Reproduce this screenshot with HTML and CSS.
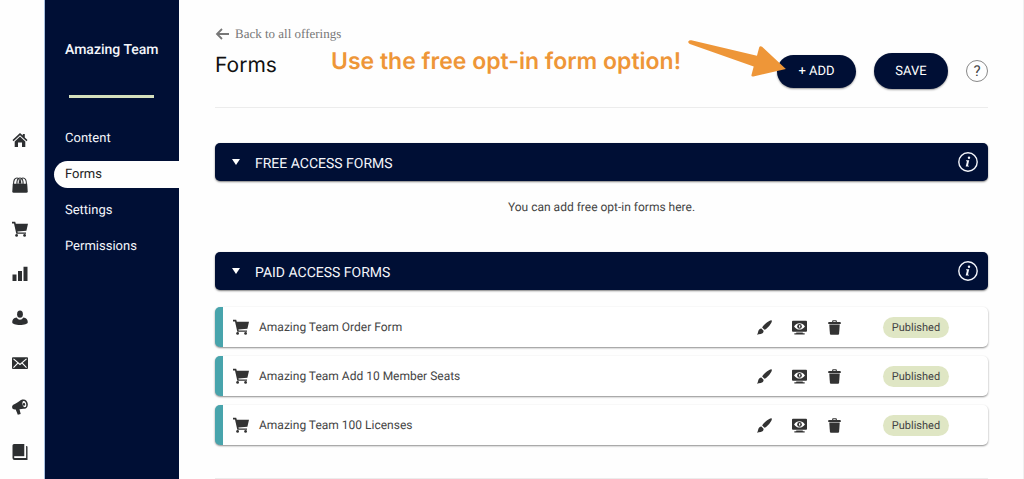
FILE: index.html
```html
<!DOCTYPE html>
<html lang="en">
<head>
  <meta charset="UTF-8">
  <meta name="viewport" content="width=device-width, initial-scale=1.0">
  <title>Forms - Amazing Team</title>
  <link rel="stylesheet" href="styles.css">
</head>
<body>

<!-- shared icons -->
<svg class="icon-defs" aria-hidden="true">
  <symbol id="icon-cart" viewBox="0 0 16 16">
    <path d="M0 .8h3.200l.6 2H16l-1.600 7-9 .6.3 1H14v1.400H4.300L2 2.400H0z"/>
    <circle cx="4.600" cy="14.400" r="1.400"/>
    <circle cx="12.600" cy="14.400" r="1.400"/>
  </symbol>
  <symbol id="icon-brush" viewBox="0 0 16 16">
    <path d="M15.600.4c.8 1-.5 3.200-2 5.100-1.800 2.300-3.800 4.100-5.600 5L5.500 8.100c.9-1.800 2.800-3.800 5-5.400C12.500 1.200 14.900-.3 15.600.4z"/>
    <path d="M4.700 9.100l2.300 2.300c.2 2-1 3.200-3 3.400-1.400.2-2.900.5-4 .9.600-.8.9-1.800 1.200-3.200.4-2 1.600-3.400 3.500-3.400z"/>
  </symbol>
  <symbol id="icon-preview" viewBox="0 0 16 16">
    <path fill-rule="evenodd" d="M1 .8h14a1 1 0 0 1 1 1v9.700a1 1 0 0 1-1 1H1a1 1 0 0 1-1-1V1.800a1 1 0 0 1 1-1zM2.200 6.800C3.700 4.600 5.700 3.400 8 3.400s4.300 1.200 5.800 3.400C12.300 9 10.300 10.200 8 10.200S3.700 9 2.200 6.800z"/>
    <circle cx="8" cy="6.800" r="2.500"/>
    <path class="icon-hole" d="M7.500 5.600h1.300v2.400H7.500z"/>
    <path d="M4.500 13.400h7v.8h2V15.500H2.500v-1.300h2z"/>
  </symbol>
  <symbol id="icon-trash" viewBox="0 0 16 16">
    <path fill-rule="evenodd" d="M5.500 2V1.200Q5.500.3 6.400.3h3.200q.9 0 .9.900V2H14q.7 0 .7.7v1.600H1.300V2.700Q1.300 2 2 2zM6.700 1.400V2h2.600v-.6z"/>
    <path d="M2.400 4.900h11.200l-.7 9.700q-.1 1.100-1.100 1.100H4.200q-1 0-1.100-1.100z"/>
  </symbol>
  <symbol id="icon-info" viewBox="0 0 20 20">
    <circle cx="10" cy="10" r="9.200" fill="none" stroke="currentColor" stroke-width="1.400"/>
    <circle cx="11" cy="5.700" r="1.200"/>
    <path d="M8.200 8.300h3l-1.300 5.400h1.300l-.3.900H7.700l1.300-5.400H8z"/>
  </symbol>
</svg>

<div class="app">
  <nav class="rail" aria-label="Main">
    <a href="#" aria-label="Home">
      <svg class="icon" viewBox="0 0 16 16">
        <path d="M8 1l2.800 2.500V2h2v3.400L15.500 8l-1 1.200L8 3.200 1.500 9.200.5 8z"/>
        <path d="M8 4.500l5.300 5V15H10v-4.500H6V15H2.700V9.500z"/>
      </svg>
    </a>
    <a href="#" aria-label="Products">
      <svg class="icon" viewBox="0 0 16 16">
        <path d="M.8 6.800h14.400l.5 7.700q0 1.300-1.300 1.300H1.600Q.3 15.800.3 14.500z"/>
        <path d="M1.500 7.500Q1.500 1 5 1T7 7.500M9 7.500Q7.500 1 11 1t3.500 6.500M5 7.500Q4.500 1 8 1t3 6.500" fill="none" stroke="currentColor" stroke-width="1.100"/>
      </svg>
    </a>
    <a href="#" aria-label="Orders"><svg class="icon"><use href="#icon-cart"/></svg></a>
    <a href="#" aria-label="Reports">
      <svg class="icon" viewBox="0 0 16 16">
        <path d="M.5 8.500h4v6.500h-4zM6 5h4v10H6zM11.500.8h4V15h-4z"/>
      </svg>
    </a>
    <a href="#" aria-label="Contacts">
      <svg class="icon" viewBox="0 0 16 16">
        <ellipse cx="8" cy="4.200" rx="2.900" ry="3.600"/>
        <path d="M4.600 7.600Q6 9.800 8 9.800t3.400-2.200c3 .6 4.400 2 4.400 4.700 0 1.700-3.500 2.700-7.800 2.700S.2 14 .2 12.300c0-2.700 1.400-4.100 4.400-4.700z"/>
      </svg>
    </a>
    <a href="#" aria-label="Email">
      <svg class="icon" viewBox="0 0 16 16">
        <rect x="0" y="2.300" width="16" height="11.800" rx="1"/>
        <path d="M1.500 3.800L8 9.500l6.500-5.700M1.500 12.700l4.300-4.500M14.500 12.700l-4.300-4.500" fill="none" stroke="#fff" stroke-width="1.100"/>
      </svg>
    </a>
    <a href="#" aria-label="Marketing">
      <svg class="icon" viewBox="0 0 16 16">
        <path fill-rule="evenodd" d="M10.200.6c3-.8 5.300 1.200 5.600 4.300.2 2.900-1.300 4.900-3.600 4.800-1.500-.1-3 .1-4.700.6l1.200 4.700-2.900.8-2.100-5.300C1.700 10.800.2 10 .1 8.300 0 6.500 1 5.500 2.800 4.900 6 3.800 8 1.300 10.200.6zm1.300 1.500c-1.100.4-1.300 2-.9 3.600.4 1.700 1.500 2.700 2.500 2.400 1.100-.4 1.400-1.900 1-3.500-.4-1.700-1.500-2.800-2.600-2.500z"/>
        <ellipse cx="12" cy="5.200" rx="1.100" ry="1.500"/>
      </svg>
    </a>
    <a href="#" aria-label="Library">
      <svg class="icon" viewBox="0 0 16 16">
        <path d="M2 0h10.300v12.300H2.200v1H13.400V2h1.100q1 0 1 1v13H2.500Q.5 16 .5 14V1.500Q.5 0 2 0z"/>
        <path d="M2.300 13.300h11.200V2" fill="none" stroke="#fff" stroke-width="1.200"/>
      </svg>
    </a>
  </nav>

  <aside class="sidebar">
    <h2>Amazing Team</h2>
    <hr>
    <nav class="menu" aria-label="Offering">
      <a href="#">Content</a>
      <a href="#" class="active" aria-current="page">Forms</a>
      <a href="#">Settings</a>
      <a href="#">Permissions</a>
    </nav>
  </aside>

  <main class="content">
    <header class="page-header">
      <div class="title-block">
        <a href="#" class="back-link">
          <svg class="back-arrow" viewBox="0 0 14 12"><path d="M13.500 6H1.500M6.500 1l-5 5 5 5" fill="none" stroke="currentColor" stroke-width="1.800"/></svg>
          Back to all offerings
        </a>
        <h1>Forms</h1>
      </div>
      <div class="actions">
        <button type="button" class="btn btn-add">+ ADD</button>
        <button type="button" class="btn btn-save">SAVE</button>
        <button type="button" class="help-btn" aria-label="Help">?</button>
      </div>
      <p class="callout">Use the free opt-in form option!</p>
      <svg class="callout-arrow" viewBox="0 0 100 40" aria-hidden="true">
        <path d="M2 3.500Q3 1.700 5 2.200L69 17.300 71.200 9Q72 7.300 74 8.500L97.200 30.200 65.500 37.500Q63 37.800 63.700 35.800L65.800 27.800 3.500 5.800Q1.600 5 2 3.500z"/>
      </svg>
    </header>

    <section class="form-group">
      <div class="group-bar">
        <button type="button" class="toggle" aria-expanded="true"><span class="caret"></span><span class="toggle-label">FREE ACCESS FORMS</span></button>
        <button type="button" class="info-btn" aria-label="About free access forms"><svg><use href="#icon-info"/></svg></button>
      </div>
      <p class="empty">You can add free opt-in forms here.</p>
    </section>

    <section class="form-group">
      <div class="group-bar">
        <button type="button" class="toggle" aria-expanded="true"><span class="caret"></span><span class="toggle-label">PAID ACCESS FORMS</span></button>
        <button type="button" class="info-btn" aria-label="About paid access forms"><svg><use href="#icon-info"/></svg></button>
      </div>
      <ul class="form-list">
        <li class="form-row">
          <svg class="icon"><use href="#icon-cart"/></svg>
          <span class="form-name">Amazing Team Order Form</span>
          <div class="row-actions">
            <button type="button" aria-label="Design"><svg><use href="#icon-brush"/></svg></button>
            <button type="button" aria-label="Preview"><svg><use href="#icon-preview"/></svg></button>
            <button type="button" aria-label="Delete"><svg><use href="#icon-trash"/></svg></button>
          </div>
          <span class="status">Published</span>
        </li>
        <li class="form-row">
          <svg class="icon"><use href="#icon-cart"/></svg>
          <span class="form-name">Amazing Team Add 10 Member Seats</span>
          <div class="row-actions">
            <button type="button" aria-label="Design"><svg><use href="#icon-brush"/></svg></button>
            <button type="button" aria-label="Preview"><svg><use href="#icon-preview"/></svg></button>
            <button type="button" aria-label="Delete"><svg><use href="#icon-trash"/></svg></button>
          </div>
          <span class="status">Published</span>
        </li>
        <li class="form-row">
          <svg class="icon"><use href="#icon-cart"/></svg>
          <span class="form-name">Amazing Team 100 Licenses</span>
          <div class="row-actions">
            <button type="button" aria-label="Design"><svg><use href="#icon-brush"/></svg></button>
            <button type="button" aria-label="Preview"><svg><use href="#icon-preview"/></svg></button>
            <button type="button" aria-label="Delete"><svg><use href="#icon-trash"/></svg></button>
          </div>
          <span class="status">Published</span>
        </li>
      </ul>
    </section>
    <hr class="end-line">
  </main>
</div>

</body>
</html>
```

FILE: styles.css
```css
* {
  box-sizing: border-box;
}
body {
  margin: 0;
  font-family: Roboto, "Liberation Sans", sans-serif;
  font-size: 12px;
  text-rendering: geometricPrecision;
  background: #fefefe;
  color: #444;
}
a {
  color: inherit;
  text-decoration: none;
}
button {
  padding: 0;
  border: none;
  background: none;
  font: inherit;
  text-rendering: inherit;
  color: inherit;
  cursor: pointer;
}
svg {
  display: block;
  fill: currentColor;
}
.icon-defs {
  position: absolute;
  width: 0;
  height: 0;
}
.icon {
  width: 16px;
  height: 16px;
}
.icon-hole {
  fill: #fff;
}
.app {
  display: flex;
  min-height: 100vh;
}

/* icon rail */
.rail {
  flex: none;
  width: 45px;
  padding: 132px 0 19px 12px;
  display: flex;
  flex-direction: column;
  justify-content: space-between;
  border-right: 1px solid #a9c1e0;
  color: #2d2f31;
}

/* sidebar */
.sidebar {
  flex: none;
  width: 134px;
  padding-top: 40px;
  background: #000f35;
  color: #f4f6fb;
}
.sidebar h2 {
  margin: 0 0 0 20px;
  font-size: 14px;
  line-height: 20px;
  font-weight: 500;
}
.sidebar hr {
  width: 85px;
  height: 3px;
  margin: 35px auto 27px 24px;
  border: none;
  background: #d5e0bd;
}
.menu {
  display: flex;
  flex-direction: column;
  gap: 9px;
  padding-left: 9px;
}
.menu a {
  padding-left: 11px;
  font-size: 13px;
  line-height: 27px;
  border-radius: 14px 0 0 14px;
}
.menu .active {
  background: #fefefe;
  color: #222;
}

/* main area */
.content {
  flex: 1;
  padding: 26px 35px 0 36px;
  border-right: 1px solid #f0f0f0;
}
.page-header {
  position: relative;
  display: flex;
  justify-content: space-between;
  height: 82px;
  border-bottom: 1px solid #ececec;
}
.back-link {
  display: flex;
  align-items: center;
  gap: 5px;
  font-family: "Liberation Serif", serif;
  font-size: 13px;
  line-height: 16px;
  color: #777;
}
.back-arrow {
  width: 15px;
  height: 12px;
}
h1 {
  margin: 11px 0 0;
  font-family: Inter, "Liberation Sans", sans-serif;
  font-size: 21px;
  line-height: 26px;
  font-weight: 400;
  color: #111;
}
.actions {
  display: flex;
  align-items: center;
  gap: 18px;
  height: 90px;
}
.btn {
  border-radius: 18px;
  background: #000f35;
  color: #fff;
  font-size: 13px;
  box-shadow: 0 1px 2px rgba(0, 0, 0, 0.4);
}
.btn-add {
  width: 79px;
  height: 33px;
}
.btn-save {
  width: 74px;
  height: 36px;
}
.help-btn {
  width: 22px;
  height: 22px;
  border: 1px solid #888;
  border-radius: 50%;
  font-size: 15px;
  line-height: 20px;
}
.callout {
  position: absolute;
  left: 116px;
  top: 20px;
  margin: 0;
  font-family: Inter, "Liberation Sans", sans-serif;
  font-size: 23px;
  line-height: 30px;
  font-weight: 600;
  color: #ee9638;
  white-space: nowrap;
}
.callout-arrow {
  position: absolute;
  right: 199px;
  top: 12px;
  width: 103px;
  height: 41px;
  color: #ee9638;
}

/* form groups */
.form-group {
  margin-top: 35px;
}
.group-bar {
  display: flex;
  align-items: center;
  justify-content: space-between;
  height: 38px;
  padding: 0 10px 0 17px;
  border-radius: 5px;
  background: #000f35;
  color: #f4f6fb;
  box-shadow: 0 1px 2px rgba(0, 0, 0, 0.5);
}
.toggle {
  display: flex;
  align-items: center;
  gap: 15px;
  font-size: 14px;
  line-height: 20px;
}
.toggle-label {
  padding-top: 4px;
}
.caret {
  border: 4px solid transparent;
  border-top: 6px solid #fff;
  border-bottom: none;
}
.info-btn svg {
  width: 20px;
  height: 20px;
}
.empty {
  margin: 17px 0 0;
  line-height: 19px;
  text-align: center;
}
.form-list {
  display: flex;
  flex-direction: column;
  gap: 9px;
  margin: 17px 0 0;
  padding: 0;
  list-style: none;
}
.form-row {
  display: flex;
  align-items: center;
  height: 40px;
  padding: 0 39px 0 10px;
  border-left: 8px solid #48a4ac;
  border-radius: 5px;
  background: #fff;
  color: #333;
  box-shadow: 0 1px 2px rgba(0, 0, 0, 0.45);
}
.form-name {
  flex: 1;
  padding-left: 10px;
  color: #444;
}
.row-actions {
  display: flex;
  gap: 20px;
  margin-right: 41px;
}
.row-actions svg {
  width: 15px;
  height: 15px;
}
.status {
  width: 66px;
  border-radius: 11px;
  background: #dfe6c4;
  color: #444;
  font-size: 11px;
  line-height: 21px;
  text-align: center;
}
.end-line {
  height: 1px;
  margin: 33px 0 0;
  border: none;
  background: #ececec;
}
```
